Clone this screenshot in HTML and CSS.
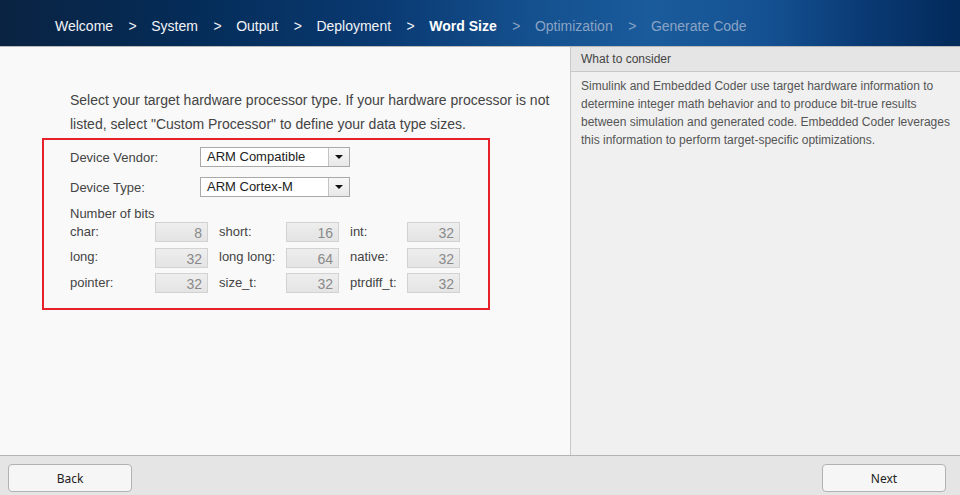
FILE: index.html
```html
<!DOCTYPE html>
<html>
<head>
<meta charset="utf-8">
<link rel="stylesheet" href="styles.css">
</head>
<body>
<div class="app">
  <header class="crumbs">
    <span class="step">Welcome</span><span class="sep">&gt;</span>
    <span class="step">System</span><span class="sep">&gt;</span>
    <span class="step">Output</span><span class="sep">&gt;</span>
    <span class="step">Deployment</span><span class="sep">&gt;</span>
    <span class="step current">Word Size</span><span class="sep dim">&gt;</span>
    <span class="step dim">Optimization</span><span class="sep dim">&gt;</span>
    <span class="step dim">Generate Code</span>
  </header>
  <main class="main">
    <section class="left">
      <p class="intro">Select your target hardware processor type. If your hardware processor is not listed, select "Custom Processor" to define your data type sizes.</p>
      <div class="box">
        <div class="row">
          <span class="rlabel">Device Vendor:</span>
          <div class="select"><span class="sval">ARM Compatible</span><span class="sarrow"><span class="tri"></span></span></div>
        </div>
        <div class="row">
          <span class="rlabel">Device Type:</span>
          <div class="select"><span class="sval">ARM Cortex-M</span><span class="sarrow"><span class="tri"></span></span></div>
        </div>
        <div class="bitstitle">Number of bits</div>
        <div class="bits">
          <span class="blabel">char:</span><span class="field">8</span>
          <span class="blabel pad">short:</span><span class="field">16</span>
          <span class="blabel pad">int:</span><span class="field">32</span>
          <span class="blabel">long:</span><span class="field">32</span>
          <span class="blabel pad">long long:</span><span class="field">64</span>
          <span class="blabel pad">native:</span><span class="field">32</span>
          <span class="blabel">pointer:</span><span class="field">32</span>
          <span class="blabel pad">size_t:</span><span class="field">32</span>
          <span class="blabel pad">ptrdiff_t:</span><span class="field">32</span>
        </div>
      </div>
    </section>
    <aside class="right">
      <div class="rhead">What to consider</div>
      <div class="rbody">Simulink and Embedded Coder use target hardware information to determine integer math behavior and to produce bit-true results between simulation and generated code. Embedded Coder leverages this information to perform target-specific optimizations.</div>
    </aside>
  </main>
  <footer class="footer">
    <button class="btn">Back</button>
    <button class="btn">Next</button>
  </footer>
</div>
</body>
</html>
```
FILE: styles.css
```css
html, body {
  margin: 0;
  padding: 0;
}
body {
  width: 960px;
  height: 495px;
  overflow: hidden;
  font-family: "Liberation Sans", Arial, sans-serif;
}
.app {
  display: flex;
  flex-direction: column;
  height: 495px;
}
.crumbs {
  box-sizing: border-box;
  border-bottom: 1px solid #b9b9b9;
  height: 47px;
  display: flex;
  align-items: center;
  padding: 6px 0 0 55px;
  background: linear-gradient(90deg, #0a2342 0%, #042c58 20%, #0a3a72 40%, #14508e 55%, #1a5b9c 68%, #145192 80%, #0a3a74 90%, #022a5a 100%);
  font-size: 14px;
  color: #f2f4f8;
}
.step.current {
  font-weight: bold;
  color: #ffffff;
}
.sep {
  margin: 0 14.5px 0 15.5px;
}
.dim {
  color: #8aa3c4;
}
.main {
  flex: 1;
  display: flex;
  min-height: 0;
}
.left {
  width: 570px;
  background: #f9f9f9;
  padding-top: 41px;
  box-sizing: border-box;
}
.intro {
  margin: 0 0 2px 70px;
  width: 490px;
  font-size: 14px;
  line-height: 24px;
  color: #444;
}
.box {
  margin-left: 42px;
  width: 448px;
  height: 172px;
  box-sizing: border-box;
  border: 2px solid #e8202a;
  padding: 7px 0 0 26px;
  font-size: 13px;
}
.row {
  display: flex;
  align-items: center;
  height: 20px;
  margin-bottom: 10px;
  color: #444;
}
.rlabel {
  width: 130px;
}
.select {
  display: flex;
  width: 150px;
  height: 20px;
  box-sizing: border-box;
  border: 1px solid #a9a9a9;
  background: #fff;
}
.sval {
  flex: 1;
  padding-left: 6px;
  line-height: 18px;
  color: #222;
}
.sarrow {
  width: 20px;
  border-left: 1px solid #c4c4c4;
  background: linear-gradient(#f8f8f8, #e8e8e8);
  display: flex;
  align-items: center;
  justify-content: center;
}
.tri {
  width: 0;
  height: 0;
  border-left: 4px solid transparent;
  border-right: 4px solid transparent;
  border-top: 4px solid #111;
}
.bitstitle {
  color: #444;
  line-height: 16px;
  margin-top: -1px;
}
.bits {
  display: grid;
  grid-template-columns: 85px 53px 78px 53px 68px 53px;
  grid-auto-rows: 20px;
  row-gap: 5.5px;
  align-items: center;
  color: #444;
}
.blabel {
  padding-bottom: 2px;
}
.blabel.pad {
  padding-left: 11px;
}
.field {
  height: 20px;
  box-sizing: border-box;
  border: 1px solid #d2d2d2;
  background: linear-gradient(#eeeeee, #e4e4e4);
  color: #8a8a8a;
  text-align: right;
  padding-right: 5px;
  line-height: 20px;
  font-size: 14px;
}
.right {
  flex: 1;
  background: #f0f0f0;
  border-left: 1px solid #c8c8c8;
}
.rhead {
  height: 24px;
  border-bottom: 1px solid #c8c8c8;
  background: #e5e5e5;
  font-size: 12px;
  line-height: 24px;
  padding-left: 10px;
  color: #444;
}
.rbody {
  padding: 5px 10px 0 10px;
  font-size: 12px;
  line-height: 18px;
  color: #555;
}
.footer {
  height: 40px;
  box-sizing: border-box;
  border-top: 1px solid #b4b4b4;
  background: #e5e5e5;
  display: flex;
  justify-content: space-between;
  align-items: flex-start;
  padding: 8px 14px 0 8px;
}
.btn {
  width: 124px;
  height: 28px;
  border: 1px solid #b2b2b2;
  border-radius: 4px;
  background: #f6f6f6;
  font-family: "Noto Sans", "Open Sans", sans-serif;
  font-size: 12px;
  color: #222;
  padding: 0;
}
```
